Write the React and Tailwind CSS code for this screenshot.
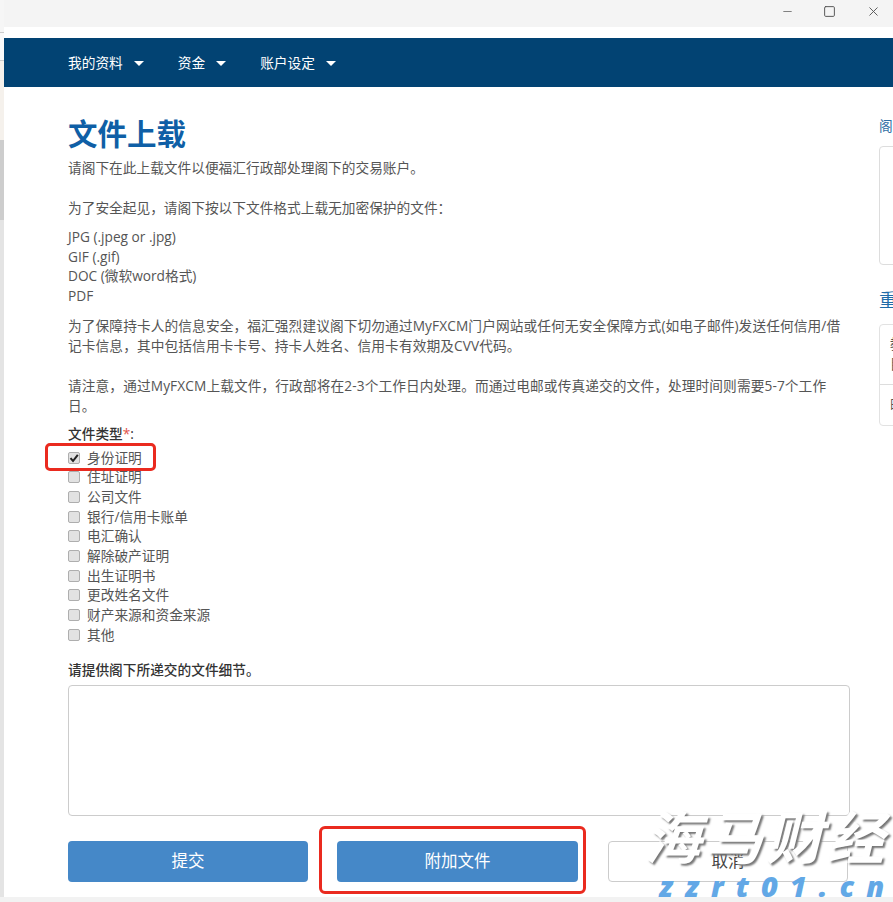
import React from 'react';
import { Minus, Square, X } from 'lucide-react';

const fileTypes = [
  '身份证明',
  '住址证明',
  '公司文件',
  '银行/信用卡账单',
  '电汇确认',
  '解除破产证明',
  '出生证明书',
  '更改姓名文件',
  '财产来源和资金来源',
  '其他',
];

function NavItem({ label, className }) {
  return (
    <div className={`flex items-center ${className}`}>
      <span className="text-[13.7px] leading-5 text-white">{label}</span>
      <span className="ml-[11px] mt-px w-0 h-0 border-x-[5px] border-x-transparent border-t-[5px] border-t-white" />
    </div>
  );
}

function FileType({ label, checked }) {
  return (
    <label className="relative flex items-center h-[19.7px] text-[13.7px] text-[#555]">
      <span className="relative flex w-3 h-3 mr-[7px]">
        <input
          type="checkbox"
          defaultChecked={checked}
          className="appearance-none w-3 h-3 rounded-[2px] border border-[#aeaeae] bg-[#e2e2e2]"
        />
        {checked && (
          <svg viewBox="0 0 12 12" className="absolute inset-0 w-3 h-3 pointer-events-none">
            <path d="M2.5 6.2 L5 9 L9.8 2.8" fill="none" stroke="#222" strokeWidth="2" />
          </svg>
        )}
      </span>
      {label}
      {checked && (
        <span className="absolute left-[-23px] top-[-5px] w-[111px] h-[28px] border-[3px] border-[#ea2a1f] rounded-[5px] pointer-events-none" />
      )}
    </label>
  );
}

export default function App() {
  return (
    <div
      className="relative h-[902px] w-[893px] overflow-hidden bg-white flex flex-col"
      style={{ fontFamily: '"Open Sans", "Noto Sans CJK SC", sans-serif' }}
    >
      {/* window title bar */}
      <div className="h-[27px] bg-[#f4f4f4] flex items-center justify-end shrink-0">
        <Minus className="w-[13px] h-[13px] mr-[29px] mb-[5px] text-[#666]" strokeWidth={1.5} />
        <Square className="w-[13px] h-[13px] mr-[30px] mb-[5px] text-[#555]" strokeWidth={1.8} />
        <X className="w-[15px] h-[15px] mr-[12px] mb-[5px] text-[#555]" strokeWidth={1.5} />
      </div>

      <div className="flex flex-1 min-h-0 -mt-[27px]">
        {/* sliver of the window behind */}
        <div className="w-1 shrink-0 flex flex-col bg-[#e2e2e2] z-10">
          <div className="h-[33px] bg-[#f6f6f6] border-b border-[#ccc]" />
          <div className="h-[28px] bg-[#fafafa] border-b border-[#ccc]" />
          <div className="h-[79px] bg-[#f5f1ec]" />
          <div className="h-[80px] bg-[#cdcdcd]" />
          <div className="flex-1 bg-[#e4e4e4]" />
        </div>

        <div className="flex-1 min-w-0 flex flex-col pt-[38px]">
          {/* nav */}
          <div className="h-[49px] bg-[#024373] flex items-center pl-16 shrink-0">
            <NavItem label="我的资料" className="mr-[34px]" />
            <NavItem label="资金" className="mr-[34px]" />
            <NavItem label="账户设定" />
          </div>

          <div className="flex flex-1 min-h-0">
            <div className="w-[782px] ml-16 shrink-0 text-[13.7px] leading-5 text-[#555]">
              <h1 className="mt-[27px] text-[29.5px] leading-10 font-bold text-[#0f5fa6]">文件上载</h1>
              <p className="mt-[4px]">请阁下在此上载文件以便福汇行政部处理阁下的交易账户。</p>
              <p className="mt-5">为了安全起见，请阁下按以下文件格式上载无加密保护的文件：</p>
              <p className="mt-[9px] leading-[19.7px]">
                JPG (.jpeg or .jpg)<br />
                GIF (.gif)<br />
                DOC (微软word格式)<br />
                PDF
              </p>
              <p className="mt-[10px] pr-[8px] tracking-[0.1px]">
                为了保障持卡人的信息安全，福汇强烈建议阁下切勿通过MyFXCM门户网站或任何无安全保障方式(如电子邮件)发送任何信用/借记卡信息，其中包括信用卡卡号、持卡人姓名、信用卡有效期及CVV代码。
              </p>
              <p className="mt-5 pr-[8px] tracking-[0.1px]">
                请注意，通过MyFXCM上载文件，行政部将在2-3个工作日内处理。而通过电邮或传真递交的文件，处理时间则需要5-7个工作日。
              </p>

              <div className="mt-[8px] font-medium text-[#333]">
                文件类型<span className="text-[#e0524c]">*</span>:
              </div>
              <div className="mt-[4px] flex flex-col">
                {fileTypes.map((t, i) => (
                  <FileType key={t} label={t} checked={i === 0} />
                ))}
              </div>

              <div className="mt-[15px] font-medium text-[#333]">请提供阁下所递交的文件细节。</div>
              <textarea className="block mt-[5px] w-full h-[131px] border border-[#ccc] rounded-[4px] resize-none outline-none" />

              <div className="mt-[25px] flex">
                <button className="w-[240px] h-[41px] rounded-[4px] bg-[#4588c8] text-white text-[16.5px]">提交</button>
                <div className="relative ml-[29px]">
                  <button className="w-[241px] h-[41px] rounded-[4px] bg-[#4588c8] text-white text-[16.5px]">附加文件</button>
                  <span className="absolute left-[-18px] top-[-15px] w-[267px] h-[68px] border-[3px] border-[#ea2a1f] rounded-[6px] pointer-events-none" />
                </div>
                <button className="ml-[30px] w-[240px] h-[41px] rounded-[4px] bg-white border border-[#ccc] text-[#444] text-[16.5px]">取消</button>
              </div>
            </div>

            {/* right column, cut off by the window */}
            <div className="ml-[29px] w-[200px] shrink-0 text-[13.7px] leading-5">
              <div className="mt-[29px] text-[#2f6fa5]">阁下的文件</div>
              <div className="mt-[10px] h-[119px] border border-[#ddd] rounded-[4px]" />
              <div className="mt-[23px] text-[18px] leading-[24px] text-[#1f6ba8]">重要信息</div>
              <div className="mt-[12px] border border-[#e2e2e2] rounded-[4px] text-[#555]">
                <div className="h-[60px] pl-[10px] pt-[9px] border-b border-[#ddd]">教育资料<br />目录</div>
                <div className="h-[40px] pl-[10px] pt-[9px]">邮件</div>
              </div>
            </div>
          </div>
        </div>
      </div>

      <div className="h-[5px] bg-[#f2f2f2] shrink-0 z-10" />

      {/* watermark */}
      <div className="absolute left-[644px] top-[804px] w-[249px] pointer-events-none">
        <div
          className="text-[57px] leading-[66px] font-bold italic text-white tracking-[4px] whitespace-nowrap"
          style={{ textShadow: '2px 2px 2px #777' }}
        >
          海马财经
        </div>
        <div className="ml-[15px] text-[29px] leading-[32px] font-extrabold italic text-[#62a8e6] tracking-[12px] whitespace-nowrap">
          zzrt01.cn
        </div>
      </div>
    </div>
  );
}
